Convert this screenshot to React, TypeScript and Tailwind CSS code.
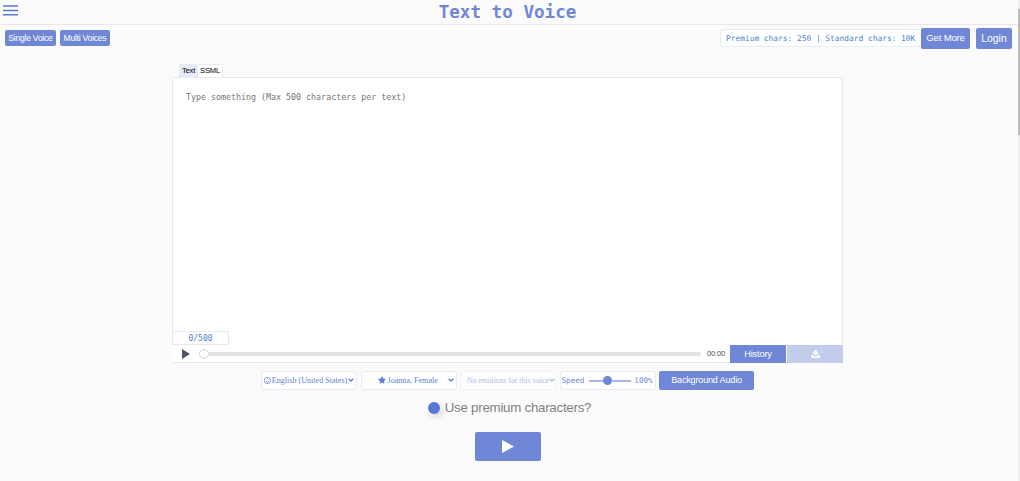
import type { ReactNode } from 'react';
import { FaRegSmile, FaStar } from 'react-icons/fa';

const sans = "font-['Liberation_Sans',Arial,sans-serif]";
const serif = "font-['Liberation_Serif',serif]";
const mono = "font-['DejaVu_Sans_Mono',monospace]";

function Chevron() {
  return (
    <svg
      viewBox="0 0 10 7"
      className="mb-px h-[4px] w-[6px] shrink-0"
      fill="none"
      stroke="currentColor"
      strokeWidth="2.4"
    >
      <path d="M1 1.2 5 5.2 9 1.2" />
    </svg>
  );
}

function Select({ children, disabled }: { children: ReactNode; disabled?: boolean }) {
  return (
    <button
      disabled={disabled}
      className={`${serif} flex h-[19px] w-[96px] items-center justify-between rounded-[3px] border border-[#e6ecf4] bg-white px-[2px] text-[8.1px] whitespace-nowrap text-[#6480d4] disabled:opacity-50`}
    >
      {children}
      <Chevron />
    </button>
  );
}

export default function App() {
  return (
    <div className={`${sans} flex h-[481px] w-[1020px] overflow-hidden bg-[#fbfbfb]`}>
      <div className="flex w-[1018px] flex-col">
        {/* Header */}
        <header className="flex h-[25px] shrink-0 border-b border-[#e8e8e8] pr-[3px]">
          <button className="flex w-[18px] pt-[5px] pl-[3px]" aria-label="Menu">
            <svg viewBox="0 0 15 11" className="h-[11px] w-[15px] fill-[#5b78d3]">
              <path d="M0 .2h15v1.5H0zM0 4.7h15v1.5H0zM0 9.1h15v1.5H0z" />
            </svg>
          </button>
          <h1
            className={`${mono} flex-1 pr-[18px] text-center text-[17.6px] leading-[24px] font-bold text-[#6f87d6]`}
          >
            Text to Voice
          </h1>
        </header>

        {/* Toolbar */}
        <div className="flex h-[39px] shrink-0 items-start justify-between pt-[3px] pr-[6px] pl-[5px] text-white">
          <div className="flex gap-1 pt-[2px] text-[8.6px] tracking-[-0.25px] whitespace-nowrap">
            <button className="h-[16px] w-[51px] rounded-[2px] bg-[#6f87d6]">Single Voice</button>
            <button className="h-[16px] w-[50px] rounded-[2px] bg-[#6f87d6]">Multi Voices</button>
          </div>
          <div className="flex">
            <div
              className={`${mono} mt-px flex h-[18px] w-[201px] items-center rounded-l-[3px] border border-r-0 border-[#e6eef2] bg-white pt-[2px] pl-[5px] text-[7.87px] whitespace-pre text-[#4a84cf]`}
            >
              Premium chars: 250 | Standard chars: 10K
            </div>
            <button className="mr-[6px] h-[21px] w-[49px] rounded-[2px] bg-[#6f87d6] text-[9.6px] tracking-[-0.2px]">
              Get More
            </button>
            <button className="h-[21px] w-[36px] rounded-[2px] bg-[#6f87d6] text-[10.4px]">
              Login
            </button>
          </div>
        </div>

        <main className="flex flex-col items-center pr-[3px]">
          {/* Editor */}
          <section className="w-[671px]">
            <div className="ml-[7px] flex h-[13px] text-[7.6px] leading-[12px] tracking-[-0.2px] text-black">
              <button className="w-[19px] border border-b-0 border-[#e6ecf6] bg-[#e6eafb]">Text</button>
              <button className="w-[25px] border border-b-0 border-l-0 border-[#e6ecf6] bg-white">
                SSML
              </button>
            </div>
            <div className="flex h-[268px] flex-col justify-between rounded-t-[2px] border border-b-0 border-[#e4eaf0] bg-white">
              <p className={`${mono} pt-[14px] pl-[13px] text-[8.32px] leading-[11px] text-[#757575]`}>
                Type something (Max 500 characters per text)
              </p>
              <div
                className={`${mono} h-[14px] w-[56px] border-t border-r border-b border-[#e4eaf0] text-center text-[8px] leading-[14px] text-[#4a7fca]`}
              >
                0/500
              </div>
            </div>

            {/* Player */}
            <div className="flex h-[18px]">
              <div className="flex w-[558px] items-center border-b border-[#e4eaf0] bg-white pl-[10px]">
                <svg viewBox="0 0 8 10" className="h-[10px] w-[8px] fill-[#4f5663]">
                  <path d="M0 0 8 5 0 10Z" />
                </svg>
                <div className="ml-[9px] size-[10px] rounded-full border border-[#d4d4d4] bg-white" />
                <div className="h-[4px] w-[492px] rounded-r-full bg-[#e4e4e4]" />
                <span className="ml-[6px] pt-px font-['Roboto',sans-serif] text-[7.6px] tracking-[-0.15px] text-[#666]">
                  00:00
                </span>
              </div>
              <button className="w-[56px] bg-[#6f87d6] pt-px text-[9.2px] tracking-[-0.15px] text-white">
                History
              </button>
              <button
                className="ml-px flex w-[56px] items-center justify-center bg-[#c3cceb]"
                aria-label="Download"
              >
                <svg viewBox="0 0 18 16" className="h-[8px] w-[9px] fill-white">
                  <path d="M6.5 0h5v5h4L9 11.5 2.5 5h4z" />
                  <path d="M0 10h4.5L9 14 13.5 10H18v6H0z" />
                </svg>
              </button>
            </div>
          </section>

          {/* Voice settings */}
          <div className="mt-2 flex gap-[3.5px]">
            <Select>
              <FaRegSmile size={7} className="shrink-0" />
              <span className="pt-px">English (United States)</span>
            </Select>
            <Select>
              <span className="ml-[14px] flex items-center gap-[2px]">
                <FaStar size={8} />
                <span className="pt-px">Joanna, Female</span>
              </span>
            </Select>
            <Select disabled>
              <span className="ml-[4px] text-[7.7px]">No emotions for this voice</span>
            </Select>
            <div
              className={`${mono} flex h-[19px] w-[96px] items-center rounded-[3px] border border-[#e6ecf4] bg-white pl-[1px] text-[7.6px] text-[#6f87d6]`}
            >
              <span className="pt-px">Speed</span>
              <div className="ml-[5px] flex w-[42px] items-center">
                <span className="h-[2px] w-[14px] bg-[#a9b7e6]" />
                <span className="size-[9px] rounded-full bg-[#6f87d6]" />
                <span className="h-[2px] flex-1 bg-[#a9b7e6]" />
              </div>
              <span className="ml-[3px] pt-px">100%</span>
            </div>
            <button className="h-[19px] w-[95px] rounded-[2px] bg-[#6f87d6] text-[9.1px] tracking-[-0.2px] text-white">
              Background Audio
            </button>
          </div>

          <label className="mt-[9px] mr-[-4px] flex h-[17px] items-center gap-[5px] text-[13.3px] tracking-[-0.25px] text-[#808080]">
            <span className="size-[12px] rounded-full bg-[#5b77d4] shadow-[3px_4px_6px_rgba(0,0,0,0.13)]" />
            Use premium characters?
          </label>

          <button
            className="mt-[16px] flex h-[29px] w-[66px] items-center justify-center rounded-[2px] bg-[#6f87d6]"
            aria-label="Play"
          >
            <svg viewBox="0 0 12 13" className="h-[13px] w-[12px] fill-white">
              <path d="M0 0 12 6.5 0 13Z" />
            </svg>
          </button>
        </main>
      </div>

      {/* Scrollbar */}
      <div className="w-[2px] bg-[#f1f1f1] pt-[9px]">
        <div className="h-[126px] bg-[#bcbcbc]" />
      </div>
    </div>
  );
}
